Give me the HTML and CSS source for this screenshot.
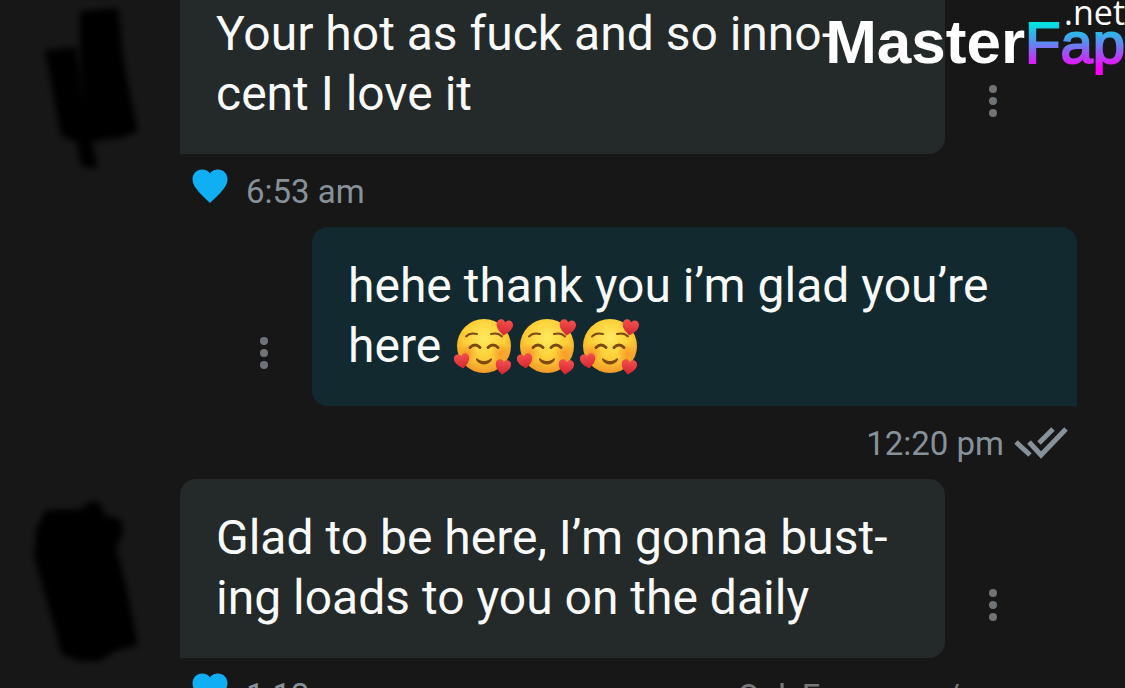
FILE: index.html
```
<!DOCTYPE html>
<html lang="en">
  <head>
    <meta charset="utf-8">
    <title>Messages</title>
    <meta name="viewport" content="width=device-width, initial-scale=1">
    <link rel="stylesheet" href="styles.css">
  </head>
  <body>
    <svg class="defs" aria-hidden="true">
      <defs>
        <radialGradient id="face" cx="50%" cy="35%" r="65%">
          <stop offset="0" stop-color="#ffe95e"/>
          <stop offset="0.6" stop-color="#fdcd34"/>
          <stop offset="1" stop-color="#f0982a"/>
        </radialGradient>
        <radialGradient id="blush">
          <stop offset="0" stop-color="#f98a25" stop-opacity="0.75"/>
          <stop offset="1" stop-color="#f98a25" stop-opacity="0"/>
        </radialGradient>
        <linearGradient id="red" x1="0" y1="0" x2="0" y2="1">
          <stop offset="0" stop-color="#f4504c"/>
          <stop offset="1" stop-color="#d32532"/>
        </linearGradient>
        <filter id="smudge" x="-20%" y="-20%" width="140%" height="140%">
          <feGaussianBlur stdDeviation="3"/>
        </filter>
      </defs>
      <symbol id="small-heart" viewBox="0 0 16 16">
        <path fill="url(#red)" d="M8 15.500C4 12.500 .3 9.500.3 5.200.3 2.500 2.200.700 4.400.700 6 .700 7.300 1.700 8 3.200 8.700 1.700 10 .700 11.600.700c2.200 0 4.100 1.800 4.100 4.500 0 4.300-3.700 7.300-7.700 10.300z"/>
      </symbol>
      <symbol id="love-face" viewBox="0 0 60 60">
        <circle cx="31" cy="30" r="27" fill="url(#face)"/>
        <circle cx="14" cy="37" r="10" fill="url(#blush)"/>
        <circle cx="48" cy="37" r="10" fill="url(#blush)"/>
        <g fill="none" stroke="#7d4a12" stroke-linecap="round">
          <path stroke-width="2" d="M13 20.500q4-4.500 11-2.500M38 18q7-2 11 2.500"/>
          <path stroke-width="3" d="M17 31.500q5-5 10 0M35 31.500q5-5 10 0"/>
        </g>
        <path fill="#7d4a12" d="M23 42.500c1-1 2 .500 3 1.200 3 1.800 7 1.800 10 0 1-.700 2-2.200 3-1.200.800 1-2.500 6-8 6s-8.800-5-8-6z"/>
        <use href="#small-heart" x="43" y="3" width="17" height="17" transform="rotate(8 51 11)"/>
        <use href="#small-heart" x="1" y="37" width="16" height="16" transform="rotate(-10 9 45)"/>
        <use href="#small-heart" x="42" y="43" width="16" height="16" transform="rotate(8 50 51)"/>
      </symbol>
      <symbol id="heart" viewBox="0 0 36 34">
        <path fill="#10aef3" d="M18 34C16 32 9 26 4.500 20 1.500 16 .500 13 .500 10 .500 4.500 5 .500 10 .500c3.500 0 6.500 1.500 8 4 1.500-2.500 4.500-4 8-4 5 0 9.500 4 9.500 9.500 0 3-1 6-4 10C27 26 20 32 18 34z"/>
      </symbol>
      <symbol id="dots" viewBox="0 0 8 32">
        <circle cx="4" cy="4" r="4"/>
        <circle cx="4" cy="16" r="4"/>
        <circle cx="4" cy="28" r="4"/>
      </symbol>
    </svg>

    <div class="logo">
      <span class="net">.net</span>
      <span class="master">Master</span><span class="fap">Fap</span>
    </div>

    <main class="chat">
      <article class="message received">
        <svg class="avatar" viewBox="0 0 180 180" aria-hidden="true">
          <g filter="url(#smudge)">
            <path d="M80 11l38-3 6 55 6 30 8 38-14 6-38 6-6-90z"/>
            <path d="M45 50l31-3 7 55 9 40 6 27-17-3-4-24-16-6-7-36z"/>
          </g>
        </svg>
        <div class="content">
          <div class="line">
            <p class="bubble">Your hot as fuck and so inno-<br>cent I love it</p>
            <button type="button" class="more" aria-label="More"><svg><use href="#dots"/></svg></button>
          </div>
          <div class="meta">
            <button type="button" class="like" aria-label="Like"><svg><use href="#heart"/></svg></button>
            <time>6:53 am</time>
          </div>
        </div>
      </article>

      <article class="message sent">
        <div class="content">
          <div class="line">
            <button type="button" class="more" aria-label="More"><svg><use href="#dots"/></svg></button>
            <p class="bubble">hehe thank you i’m glad you’re<br>here <svg class="emoji"><use href="#love-face"/></svg><svg class="emoji"><use href="#love-face"/></svg><svg class="emoji"><use href="#love-face"/></svg></p>
          </div>
          <div class="meta">
            <time>12:20 pm</time>
            <svg class="checks" viewBox="0 0 54 32" aria-label="Read">
              <path d="M2 15l14 13M15 15l12 13L52 2M25 16L39 2"/>
            </svg>
          </div>
        </div>
      </article>

      <article class="message received">
        <svg class="avatar" viewBox="0 0 180 180" aria-hidden="true">
          <g filter="url(#smudge)">
            <path d="M46 31l36-1 6-7h12l4 12 19 7-1 16-6 10 10 38 12 60-22 6-16 10H80l-18-6-14-50-14-48 2-28z"/>
          </g>
        </svg>
        <div class="content">
          <div class="line">
            <p class="bubble">Glad to be here, I’m gonna bust-<br>ing loads to you on the daily</p>
            <button type="button" class="more" aria-label="More"><svg><use href="#dots"/></svg></button>
          </div>
          <div class="meta">
            <button type="button" class="like" aria-label="Like"><svg><use href="#heart"/></svg></button>
            <time>1:13 pm</time>
            <span class="source">OnlyFans.com/</span>
          </div>
        </div>
      </article>
    </main>
  </body>
</html>
```
FILE: styles.css
```
* {
  box-sizing: border-box;
}

html {
  height: 100%;
  overflow: hidden;
}

body {
  margin: 0;
  height: 100%;
  overflow: hidden;
  position: relative;
  background: #171718;
  color: #fafafa;
  font-family: Roboto, sans-serif;
}

button {
  border: none;
  padding: 0;
  background: none;
  cursor: pointer;
}

.defs {
  position: absolute;
  width: 0;
  height: 0;
}

/* scrolled a little, so the first bubble is cut by the top edge */
.chat {
  height: 100%;
  margin-top: -25px;
}

.message {
  display: flex;
}

.message.sent {
  justify-content: flex-end;
  padding-right: 48px;
}

.avatar {
  flex: none;
  width: 180px;
  height: 180px;
  margin-bottom: -20px;
  overflow: visible;
}

.message:first-child .avatar {
  margin-top: 25px;
}

.content {
  flex: 1;
}

.line {
  display: flex;
}

.sent .line {
  justify-content: flex-end;
}

.bubble {
  width: 68vw;
  margin: 0;
  padding: 29px 36px 30px;
  border-radius: 16px 16px 16px 0;
  background: #242929;
  font-size: 48px;
  line-height: 60px;
  white-space: nowrap;
}

.sent .bubble {
  border-radius: 16px 16px 0 16px;
  background: #11292f;
}

.emoji {
  width: 60px;
  height: 60px;
  margin-right: 3px;
  vertical-align: top;
}

.more {
  width: 96px;
  padding-top: 76px;
  fill: #707476;
}

.more svg {
  width: 8px;
  height: 32px;
}

.meta {
  display: flex;
  align-items: center;
  height: 73px;
  padding: 0 9px 0 12px;
  color: #87919a;
  font-size: 33px;
}

.meta time {
  padding-top: 2px;
}

.sent .meta {
  justify-content: flex-end;
}

.like {
  margin-right: 18px;
  padding-bottom: 10px;
}

.like svg {
  display: block;
  width: 36px;
  height: 34px;
}

.checks {
  width: 54px;
  height: 32px;
  margin-left: 10px;
  fill: none;
  stroke: #87919a;
  stroke-width: 5px;
}

.source {
  margin: 4px 156px 0 auto;
  color: #777;
}

.logo {
  position: absolute;
  top: 7px;
  right: 0;
  font-family: "Liberation Sans", Arial, sans-serif;
  font-size: 62px;
  line-height: 70px;
  white-space: nowrap;
}

.master {
  color: #fff;
  font-weight: bold;
}

.fap {
  background: linear-gradient(#00e5e0 20%, #5a8cf0 50%, #f0f 90%);
  -webkit-background-clip: text;
  background-clip: text;
  color: transparent;
  font-size: 58px;
  -webkit-text-stroke: 2px transparent;
}

.net {
  position: absolute;
  top: -15px;
  right: 0;
  color: #fff;
  font-family: "Open Sans", sans-serif;
  font-size: 34px;
  line-height: 40px;
}
```
